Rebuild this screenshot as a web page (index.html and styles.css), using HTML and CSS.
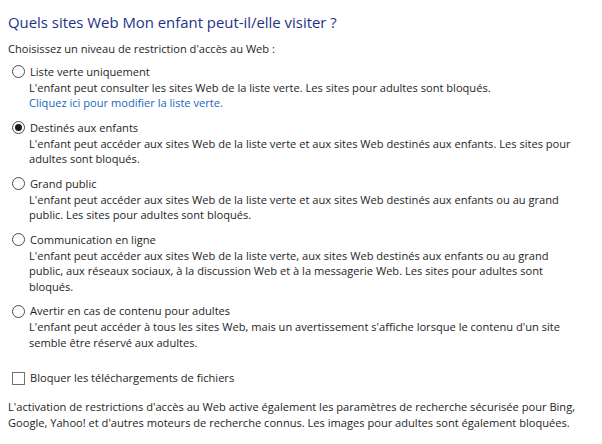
FILE: index.html
```html
<!DOCTYPE html>
<html lang="fr">
<head>
<meta charset="utf-8">
<link rel="stylesheet" href="styles.css">
</head>
<body>
<div class="page">
  <h1 class="title">Quels sites Web Mon enfant peut-il/elle visiter ?</h1>
  <p class="intro">Choisissez un niveau de restriction d'accès au Web :</p>
  <div class="options">
    <div class="option">
      <div class="row"><span class="radio"></span><span class="label">Liste verte uniquement</span></div>
      <div class="desc">L'enfant peut consulter les sites Web de la liste verte. Les sites pour adultes sont bloqués.<br><span class="link">Cliquez ici pour modifier la liste verte.</span></div>
    </div>
    <div class="option">
      <div class="row"><span class="radio checked"></span><span class="label">Destinés aux enfants</span></div>
      <div class="desc">L'enfant peut accéder aux sites Web de la liste verte et aux sites Web destinés aux enfants. Les sites pour<br>adultes sont bloqués.</div>
    </div>
    <div class="option">
      <div class="row"><span class="radio"></span><span class="label">Grand public</span></div>
      <div class="desc">L'enfant peut accéder aux sites Web de la liste verte et aux sites Web destinés aux enfants ou au grand<br>public. Les sites pour adultes sont bloqués.</div>
    </div>
    <div class="option">
      <div class="row"><span class="radio"></span><span class="label">Communication en ligne</span></div>
      <div class="desc">L'enfant peut accéder aux sites Web de la liste verte, aux sites Web destinés aux enfants ou au grand<br>public, aux réseaux sociaux, à la discussion Web et à la messagerie Web. Les sites pour adultes sont<br>bloqués.</div>
    </div>
    <div class="option">
      <div class="row"><span class="radio"></span><span class="label">Avertir en cas de contenu pour adultes</span></div>
      <div class="desc">L'enfant peut accéder à tous les sites Web, mais un avertissement s'affiche lorsque le contenu d'un site<br>semble être réservé aux adultes.</div>
    </div>
  </div>
  <div class="row check-row"><span class="checkbox"></span><span class="label">Bloquer les téléchargements de fichiers</span></div>
  <p class="footer">L'activation de restrictions d'accès au Web active également les paramètres de recherche sécurisée pour Bing,<br>Google, Yahoo! et d'autres moteurs de recherche connus. Les images pour adultes sont également bloquées.</p>
</div>
</body>
</html>
```
FILE: styles.css
```css
html, body {
  margin: 0;
  padding: 0;
  background: #ffffff;
}
.page {
  padding: 11px 8px 0 8px;
  font-family: "Open Sans", "Noto Sans", sans-serif;
  font-size: 11.1px;
  line-height: 15.5px;
  color: #1e1e1e;
  white-space: nowrap;
}
.title {
  margin: 0;
  font-size: 14.9px;
  line-height: 22px;
  font-weight: normal;
  color: #1e3287;
}
.intro {
  margin: 8px 0 0 0;
}
.options {
  margin-top: 7px;
  display: flex;
  flex-direction: column;
  gap: 9px;
}
.row {
  display: flex;
  align-items: center;
  height: 16px;
}
.radio {
  width: 11px;
  height: 11px;
  border: 1px solid #4a4a4a;
  border-radius: 50%;
  margin-left: 4px;
  margin-right: 5px;
  box-sizing: content-box;
  display: inline-flex;
  align-items: center;
  justify-content: center;
  background: #fff;
}
.radio.checked::after {
  content: "";
  width: 7px;
  height: 7px;
  border-radius: 50%;
  background: #1a1a1a;
}
.desc {
  padding-left: 21px;
}
.link {
  color: #1a66c2;
}
.check-row {
  margin-top: 20px;
}
.checkbox {
  width: 11px;
  height: 11px;
  border: 1px solid #707070;
  margin-left: 4px;
  margin-right: 5px;
  background: #fff;
}
.footer {
  margin: 13px 0 0 0;
}
```
